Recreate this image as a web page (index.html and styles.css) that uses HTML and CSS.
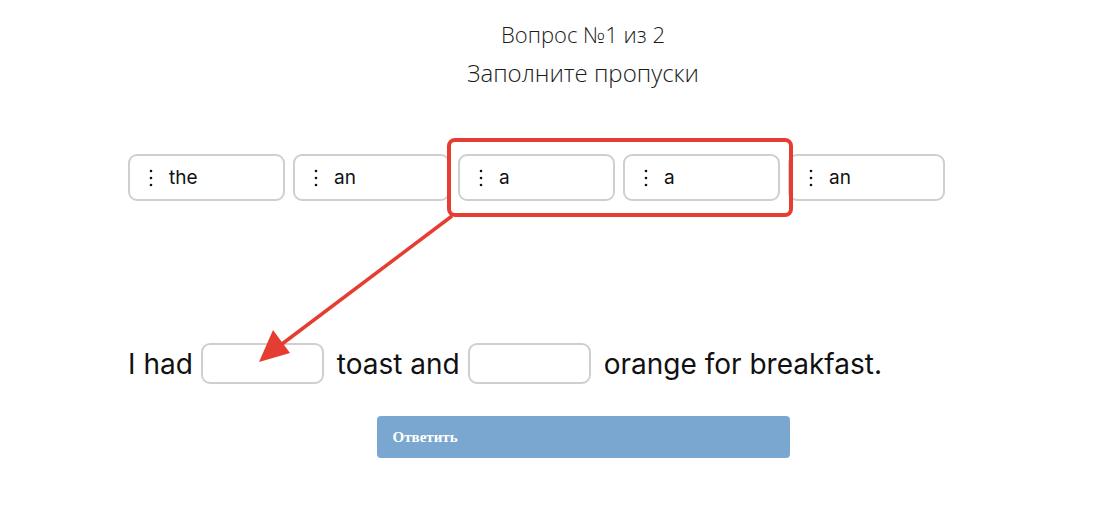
FILE: index.html
```html
<!DOCTYPE html>
<html lang="ru">
<head>
<meta charset="utf-8">
<title>Вопрос</title>
<link rel="stylesheet" href="styles.css">
</head>
<body>
<main class="quiz">
  <header class="quiz-head">
    <div class="quiz-num">Вопрос №1 из 2</div>
    <h1 class="quiz-title">Заполните пропуски</h1>
  </header>

  <div class="chips">
    <div class="chip"><svg class="grip" width="4" height="18" viewBox="0 0 4 18"><circle cx="2" cy="2" r="1.3"/><circle cx="2" cy="9" r="1.3"/><circle cx="2" cy="16" r="1.3"/></svg><span>the</span></div>
    <div class="chip"><svg class="grip" width="4" height="18" viewBox="0 0 4 18"><circle cx="2" cy="2" r="1.3"/><circle cx="2" cy="9" r="1.3"/><circle cx="2" cy="16" r="1.3"/></svg><span>an</span></div>
    <div class="chip"><svg class="grip" width="4" height="18" viewBox="0 0 4 18"><circle cx="2" cy="2" r="1.3"/><circle cx="2" cy="9" r="1.3"/><circle cx="2" cy="16" r="1.3"/></svg><span>a</span></div>
    <div class="chip"><svg class="grip" width="4" height="18" viewBox="0 0 4 18"><circle cx="2" cy="2" r="1.3"/><circle cx="2" cy="9" r="1.3"/><circle cx="2" cy="16" r="1.3"/></svg><span>a</span></div>
    <div class="chip"><svg class="grip" width="4" height="18" viewBox="0 0 4 18"><circle cx="2" cy="2" r="1.3"/><circle cx="2" cy="9" r="1.3"/><circle cx="2" cy="16" r="1.3"/></svg><span>an</span></div>
  </div>

  <p class="sentence">
    <span>I had</span><span class="blank"></span><span>toast and</span><span class="blank"></span><span>orange for breakfast.</span>
  </p>

  <div class="actions">
    <button class="btn-answer" type="button">Ответить</button>
  </div>
</main>

<svg class="annotation" width="1101" height="528" viewBox="0 0 1101 528">
  <rect x="449" y="140" width="342" height="75" rx="6" ry="6" fill="none" stroke="#e63d32" stroke-width="4"/>
  <line x1="452" y1="216" x2="282" y2="344" stroke="#e63d32" stroke-width="3.5"/>
  <polygon points="259,362 273,330 290,353" fill="#e63d32"/>
</svg>
</body>
</html>
```
FILE: styles.css
```css
* { box-sizing: border-box; }

body {
  margin: 0;
  background: #fff;
  color: #111;
  font-family: "Open Sans", "Liberation Sans", sans-serif;
}

.quiz {
  width: 910px;
  margin-left: 128px;
  padding-top: 20px;
}

.quiz-head {
  text-align: center;
  color: #1b1b1b;
}

.quiz-num {
  font-size: 22px;
  line-height: 28px;
  font-weight: 300;
}

.quiz-title {
  margin: 10px 0 0;
  font-size: 24px;
  line-height: 30px;
  font-weight: 300;
}

.chips {
  display: flex;
  gap: 8px;
  margin-top: 66px;
}

.chip {
  width: 157px;
  height: 47px;
  flex: none;
  border: 2px solid #cfcfcf;
  border-radius: 9px;
  display: flex;
  align-items: center;
  padding-left: 19px;
  gap: 16px;
  font-family: "Inter", "Liberation Sans", sans-serif;
  font-size: 19px;
  color: #111;
}

.grip { fill: #111; }

.sentence {
  margin: 142px 0 0;
  display: flex;
  align-items: center;
  font-family: "Inter", "Liberation Sans", sans-serif;
  font-size: 28px;
  font-weight: 400;
  letter-spacing: 0;
  color: #111;
}

.blank {
  width: 123px;
  height: 41px;
  margin: 0 13px 0 8px;
  border: 2px solid #cfcfcf;
  border-radius: 9px;
}

.actions {
  display: flex;
  justify-content: center;
  margin-top: 32px;
}

.btn-answer {
  width: 413px;
  height: 42px;
  border: 0;
  border-radius: 4px;
  background: #7aa7d0;
  color: #fff;
  text-align: left;
  padding: 0 0 0 16px;
  font-family: "Liberation Serif", serif;
  font-weight: 700;
  font-size: 15px;
}

.annotation {
  position: absolute;
  left: 0;
  top: 0;
  pointer-events: none;
}
```
